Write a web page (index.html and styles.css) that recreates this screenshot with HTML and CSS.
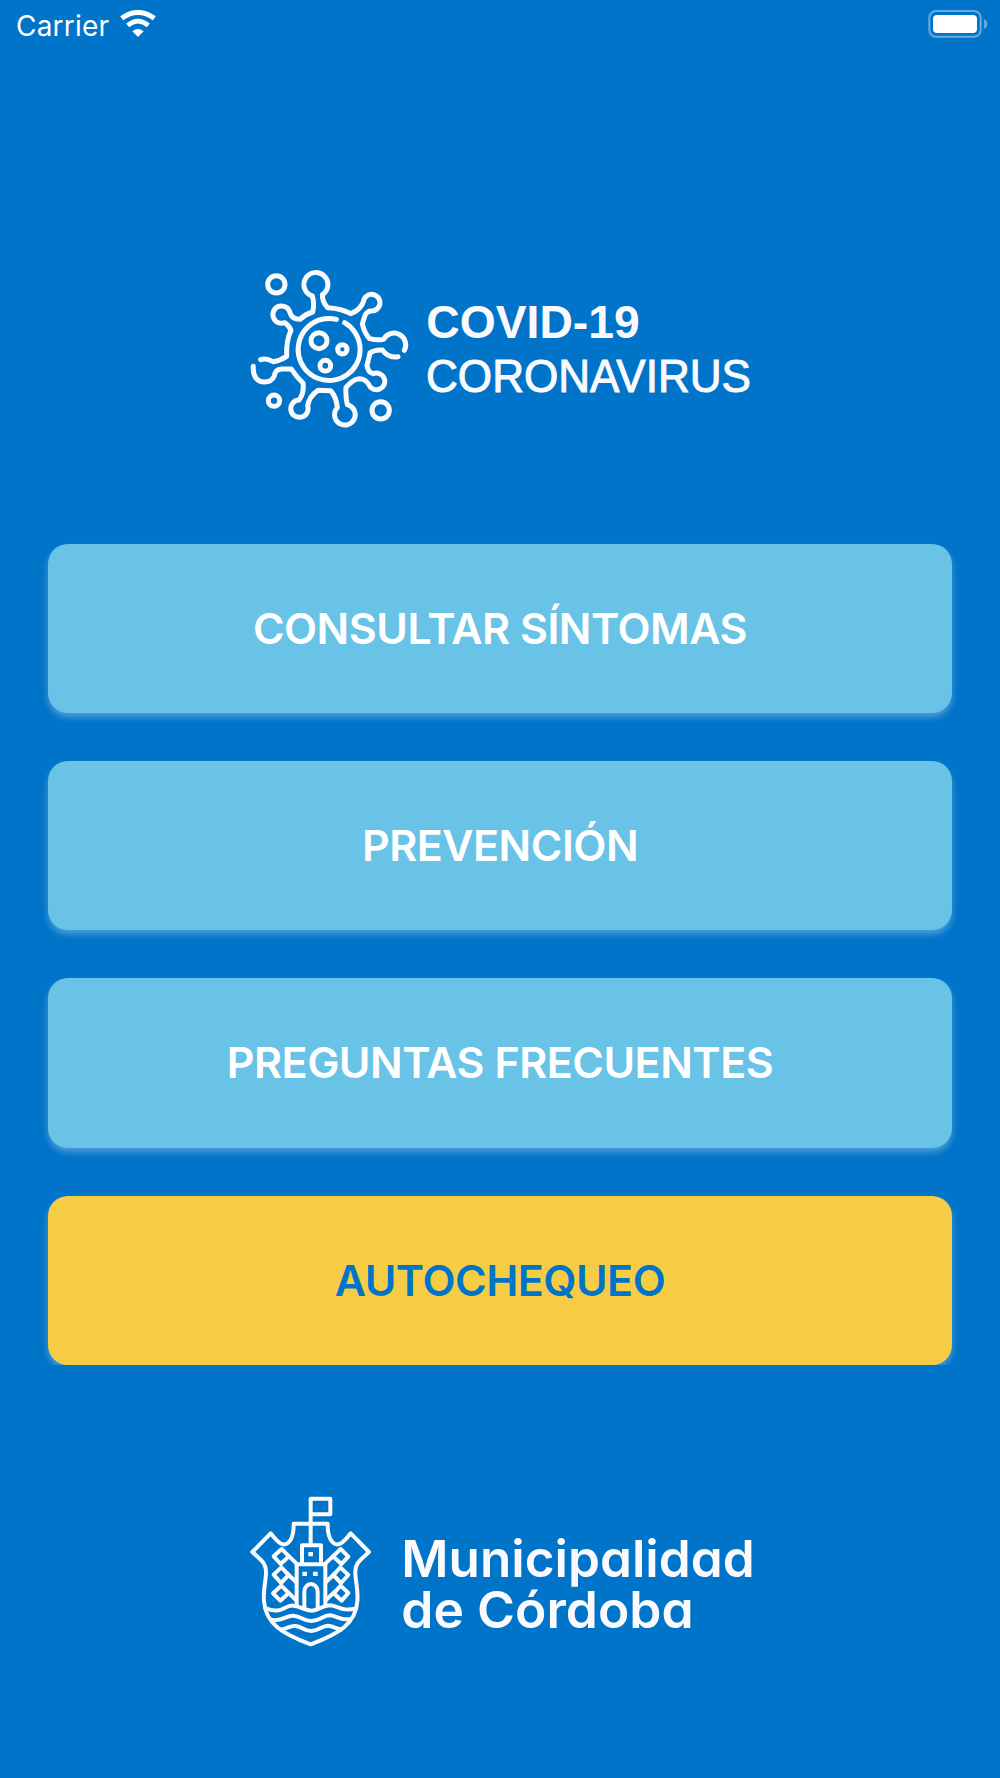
FILE: index.html
```html
<!DOCTYPE html>
<html lang="es">
<head>
    <meta charset="UTF-8">
    <meta name="viewport" content="width=device-width, initial-scale=1.0">
    <title>COVID-19 Municipalidad de Córdoba</title>
    <link rel="stylesheet" href="styles.css">
</head>
<body>
    <header class="status-bar">
        <span class="carrier">Carrier</span>
        <svg class="wifi" viewBox="0 0 108 81">
            <path d="M5 25 Q54 -10 103 25" stroke-width="15"/>
            <path d="M23 46 Q54 21 85 46" stroke-width="14"/>
            <path class="dot" d="M37 64 Q54 50 71 64 L54 81 Z"/>
        </svg>
        <svg class="battery" viewBox="0 0 180 84">
            <rect class="shell" x="4" y="3" width="154" height="77" rx="20"/>
            <rect class="charge" x="15" y="15" width="132" height="54" rx="12"/>
            <path class="tip" d="M168 27 Q178 32 178 42 Q178 52 168 57 Z"/>
        </svg>
    </header>

    <main>
        <svg class="covid-logo" viewBox="0 0 1560 540">
            <g class="virus">
                <!-- free particles -->
                <circle cx="109" cy="73" r="26"/>
                <circle cx="102" cy="422" r="17"/>
                <circle cx="422" cy="451" r="26"/>
                <!-- nucleus -->
                <path d="M289 178 A93 93 0 1 0 314 188"/>
                <circle cx="237" cy="242" r="24"/>
                <circle cx="307" cy="268" r="14"/>
                <circle cx="256" cy="317" r="16"/>
                <!-- membrane -->
                <path d="M62 299 Q78 293 99 305 Q120 302 140 289 Q138 242 153 211 Q147 196 134 188 A26 26 0 1 1 150 158 Q155 178 180 178 Q197 162 218 156 Q224 130 217 108 A36 36 0 1 1 247 104 Q247 126 263 143 Q305 145 332 161 Q360 151 370 126 A25 25 0 1 1 393 153 C373 154 373 177 367 191 Q373 219 389 236 Q410 242 431 238 A35 35 0 1 1 493 271"/>
                <path d="M40 319 C37 352 55 366 73 366 C89 366 98 359 103 348 Q106 328 124 327 H154 Q168 349 189 369 Q193 400 177 420 A26 26 0 1 0 203 438 Q207 409 234 391 L272 392 Q289 410 292 443 A31 31 0 1 0 322 434 Q316 408 318 382 Q340 357 358 356 Q377 357 386 373 A25 25 0 1 0 400 341 Q383 337 381 316 Q385 300 390 279 Q402 269 427 270 Q445 295 474 290"/>
            </g>
            <text class="covid-title" x="559" y="234" textLength="640" lengthAdjust="spacingAndGlyphs">COVID-19</text>
            <text class="covid-subtitle" x="558" y="397" textLength="975" lengthAdjust="spacingAndGlyphs">CORONAVIRUS</text>
        </svg>

        <nav class="menu">
            <button class="menu-button"><span>CONSULTAR SÍNTOMAS</span></button>
            <button class="menu-button"><span>PREVENCIÓN</span></button>
            <button class="menu-button"><span>PREGUNTAS FRECUENTES</span></button>
            <button class="menu-button highlight"><span>AUTOCHEQUEO</span></button>
        </nav>
    </main>

    <footer>
        <svg class="city-logo" viewBox="0 0 1560 510">
            <g class="shield">
                <!-- outline -->
                <path d="M212 176 V41 H271 V88 H217"/>
                <path d="M212 116 H161 C162 164 144 180 129 178 C115 176 104 159 92 145 L37 201 C62 224 80 233 78 266 C76 300 69 316 72 348 C76 415 125 445 212 478 C299 445 348 415 352 348 C355 316 348 300 346 266 C344 233 362 224 387 201 L332 145 C320 159 309 176 295 178 C280 180 262 164 263 116 H212"/>
                <!-- tower -->
                <path d="M186 236 V181 H243 V236 M170 368 V238 H256 V368"/>
                <path d="M193 370 V320 A20 23 0 0 1 233 320 V370"/>
                <path class="solid" d="M205 201 h14 v13 h-14z M187 260 h14 v13 h-14z M219 260 h14 v13 h-14z"/>
                <!-- flags -->
                <path d="M125 192 L147 214 L122 237 L101 214 Z M124 247 L146 270 L123 294 L101 269 Z M124 302 L146 324 L121 347 L99 325 Z"/>
                <path d="M141 208 L170 236 M140 264 L168 291 M141 319 L168 345"/>
                <path d="M302 192 L325 215 L304 237 L279 214 Z M301 247 L325 270 L303 294 L280 270 Z M302 302 L325 324 L305 347 L281 325 Z"/>
                <path d="M285 208 L256 236 M286 264 L258 291 M285 319 L258 345"/>
                <!-- water -->
                <path d="M76 369 C125 391 132 359 160 362 C188 365 191 377 216 377 C242 375 246 361 270 361 C297 363 304 381 348 370"/>
                <path d="M93 404 C126 412 139 390 160 392 C187 395 188 408 214 408 C242 407 247 391 270 391 C293 393 302 408 335 402"/>
                <path d="M120 434 C145 431 149 421 166 423 C188 425 190 438 214 438 C237 437 246 422 263 422 C281 423 287 432 307 434"/>
            </g>
            <text class="city-name" x="484" y="275" textLength="1060" lengthAdjust="spacingAndGlyphs">Municipalidad</text>
            <text class="city-name" x="484" y="430" textLength="877" lengthAdjust="spacingAndGlyphs">de Córdoba</text>
        </svg>
    </footer>
</body>
</html>
```

FILE: styles.css
```css
* {
    box-sizing: border-box;
}
body {
    margin: 0;
    height: 1778px;
    background-color: #0074c9;
    color: #fff;
    font-family: Inter, "Liberation Sans", sans-serif;
    overflow: hidden;
}
.status-bar {
    display: flex;
    align-items: flex-start;
    height: 50px;
    padding: 10px 12px 0 16px;
}
.carrier {
    font-size: 28px;
    line-height: 32px;
    letter-spacing: 0.2px;
}
.wifi {
    width: 36px;
    height: 27px;
    margin-left: 11px;
    fill: none;
    stroke: #fff;
}
.wifi .dot {
    fill: #fff;
    stroke: none;
}
.battery {
    width: 60px;
    height: 28px;
    margin-left: auto;
}
.battery .shell {
    fill: none;
    stroke: #66aade;
    stroke-width: 6;
}
.battery .charge {
    fill: #fff;
}
.battery .tip {
    fill: #66aade;
}
.covid-logo {
    display: block;
    width: 520px;
    height: 180px;
    margin: 210px 0 0 240px;
}
.virus,
.shield {
    fill: none;
    stroke: #fafafc;
    stroke-width: 15;
    stroke-linecap: round;
    stroke-linejoin: round;
}
.covid-title,
.covid-subtitle {
    fill: #fafafc;
    font-family: "Liberation Sans", Arial, sans-serif;
    font-size: 137px;
}
.covid-title {
    font-weight: bold;
}
.covid-subtitle {
    stroke: #fafafc;
    stroke-width: 3;
}
.menu {
    display: flex;
    flex-direction: column;
    gap: 48px;
    margin-top: 103.5px;
    padding: 0 48px;
}
.menu-button {
    height: 169.4px;
    padding: 0 0 1px;
    border: none;
    border-radius: 20px;
    background-color: #69c3e7;
    box-shadow: 0 4px 6px rgba(255, 255, 255, 0.3);
    color: #fff;
    font-family: inherit;
    font-size: 43px;
    font-weight: 600;
    letter-spacing: -0.5px;
    cursor: pointer;
}
.menu-button.highlight {
    background-color: #f6cc44;
    color: #0074c9;
    clip-path: inset(-10px -10px 0);
}
.city-logo {
    display: block;
    width: 520px;
    height: 170px;
    margin: 120px 0 0 240px;
}
.shield {
    stroke-width: 12;
    stroke-linecap: butt;
}
.shield .solid {
    fill: #fafafc;
    stroke: none;
}
/* single-storey "a" to stay close to the city's typeface */
.city-name {
    fill: #fafafc;
    font-family: Inter, "Open Sans", sans-serif;
    font-feature-settings: "cv11";
    font-size: 152px;
    font-weight: 600;
}
```
